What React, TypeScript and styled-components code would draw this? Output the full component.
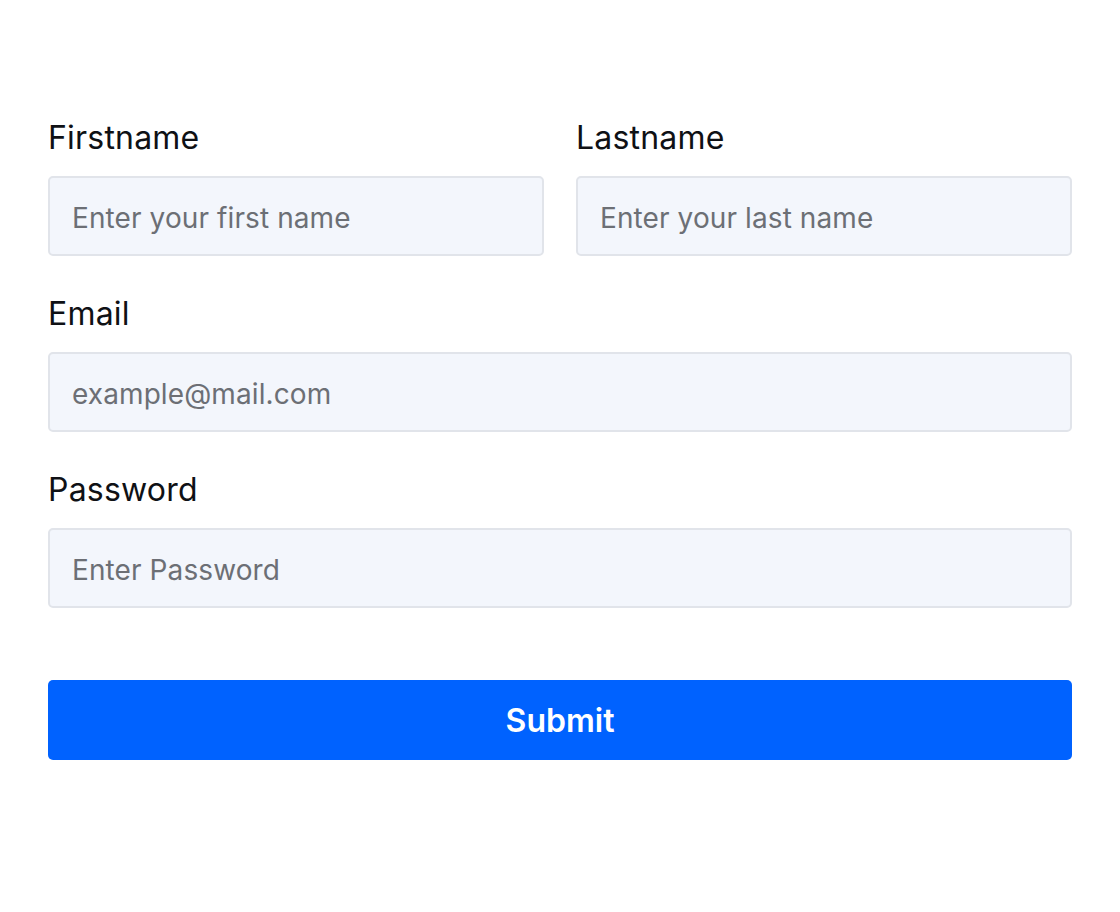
import styled, { createGlobalStyle } from 'styled-components';

const GlobalStyle = createGlobalStyle`
  html, body {
    margin: 0;
    padding: 0;
    background: #ffffff;
    font-family: Inter, "Noto Sans", sans-serif;
  }
  * {
    box-sizing: border-box;
  }
`;

const Page = styled.div`
  padding: 120px 48px 48px;
`;

const Form = styled.form`
  display: flex;
  flex-direction: column;
  gap: 40px;
`;

const Row = styled.div`
  display: grid;
  grid-template-columns: 1fr 1fr;
  gap: 32px;
`;

const Field = styled.div`
  display: flex;
  flex-direction: column;
  gap: 16px;
`;

const Label = styled.label`
  font-size: 32px;
  line-height: 36px;
  height: 40px;
  color: #0f1115;
  font-weight: 400;
  letter-spacing: 0.2px;
`;

const Input = styled.input`
  height: 80px;
  width: 100%;
  padding: 4px 22px 0;
  border: 2px solid #e1e4ea;
  border-radius: 5px;
  background: #f3f6fc;
  font-family: inherit;
  font-size: 28px;
  letter-spacing: 0.1px;
  color: #111;
  outline: none;

  &::placeholder {
    color: #6c6f75;
  }
`;

const SubmitButton = styled.button`
  margin-top: 32px;
  height: 80px;
  width: 100%;
  border: none;
  border-radius: 5px;
  background: #0062ff;
  color: #ffffff;
  font-family: inherit;
  font-size: 32px;
  font-weight: 600;
  cursor: pointer;
`;

const App = () => {
  return (
    <Page>
      <GlobalStyle />
      <Form onSubmit={e => e.preventDefault()}>
        <Row>
          <Field>
            <Label htmlFor="firstname">Firstname</Label>
            <Input id="firstname" placeholder="Enter your first name" />
          </Field>
          <Field>
            <Label htmlFor="lastname">Lastname</Label>
            <Input id="lastname" placeholder="Enter your last name" />
          </Field>
        </Row>
        <Field>
          <Label htmlFor="email">Email</Label>
          <Input id="email" type="email" placeholder="example@mail.com" />
        </Field>
        <Field>
          <Label htmlFor="password">Password</Label>
          <Input id="password" type="password" placeholder="Enter Password" />
        </Field>
        <SubmitButton type="submit">Submit</SubmitButton>
      </Form>
    </Page>
  );
};

export default App;
